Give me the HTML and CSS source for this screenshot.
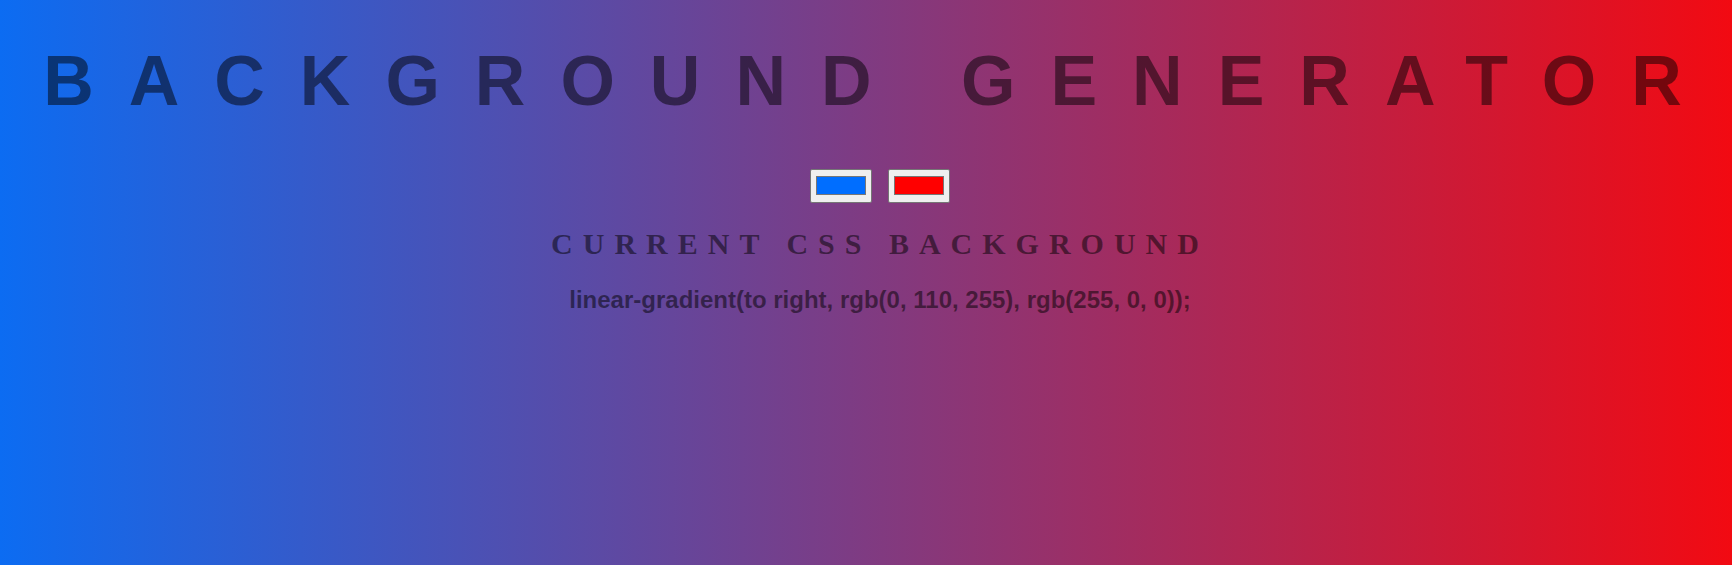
FILE: index.html
```html
<!DOCTYPE html>
<html lang="en">
<head>
<meta charset="utf-8">
<title>Background Generator</title>
<link rel="stylesheet" href="styles.css">
</head>
<body>
  <h1 class="title">Background Generator</h1>
  <div class="pickers">
    <input class="picker" type="color" name="color1" value="#006eff">
    <input class="picker" type="color" name="color2" value="#ff0000">
  </div>
  <h2 class="subtitle">Current CSS Background</h2>
  <h3 class="css-value">linear-gradient(to right, rgb(0, 110, 255), rgb(255, 0, 0));</h3>
</body>
</html>
```

FILE: styles.css
```css
html {
  min-height: 100%;
}

body {
  margin: 0;
  padding: 41px 0 0 28px;
  min-height: 565px;
  box-sizing: border-box;
  background: linear-gradient(to right, rgb(12, 108, 242), rgb(242, 10, 18));
  color: rgba(0, 0, 0, 0.5);
  text-align: center;
  font-family: "Liberation Sans", Arial, sans-serif;
}

.title {
  margin: 0;
  font-family: "Liberation Sans", Arial, sans-serif;
  font-weight: 700;
  font-size: 70px;
  line-height: 80px;
  letter-spacing: 35px;
  text-transform: uppercase;
  color: rgba(0, 0, 0, 0.5);
}

.pickers {
  display: flex;
  justify-content: center;
  gap: 16px;
  margin-top: 48px;
}

.picker {
  -webkit-appearance: none;
  appearance: none;
  width: 62px;
  height: 34px;
  box-sizing: border-box;
  margin: 0;
  padding: 1px 2px;
  border: 1px solid #767676;
  border-radius: 2px;
  background: #efefef;
  cursor: pointer;
}

.picker::-webkit-color-swatch-wrapper {
  padding: 5px 3px 6px;
}

.picker::-webkit-color-swatch {
  border: 1px solid #777777;
  border-radius: 0;
}

.subtitle {
  margin: 24px 0 0;
  font-family: "Liberation Serif", "Times New Roman", serif;
  font-weight: 700;
  font-size: 30px;
  line-height: 34px;
  letter-spacing: 10px;
  text-transform: uppercase;
  color: rgba(0, 0, 0, 0.5);
}

.css-value {
  margin: 25px 0 0;
  font-family: "Liberation Sans", Arial, sans-serif;
  font-weight: 700;
  font-size: 24px;
  line-height: 27px;
  color: rgba(0, 0, 0, 0.5);
}
```
